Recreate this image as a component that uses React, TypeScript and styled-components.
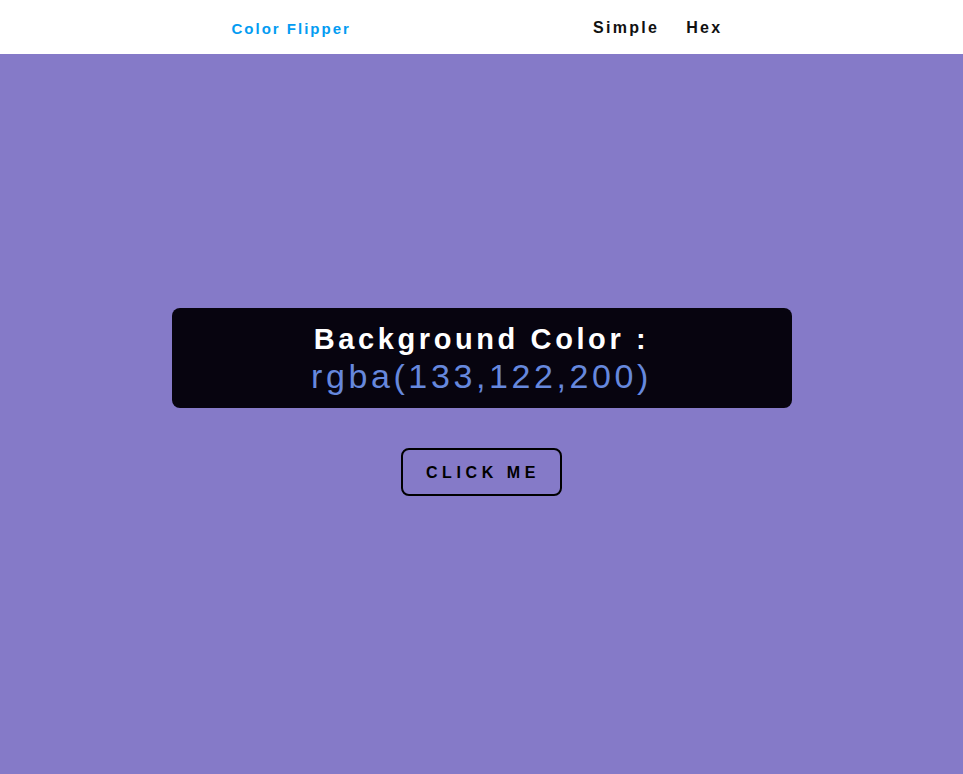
import React, { useState } from 'react';
import styled, { createGlobalStyle } from 'styled-components';

const GlobalStyle = createGlobalStyle`
  body {
    margin: 0;
    padding: 0;
    font-family: "Liberation Sans", Arial, sans-serif;
  }
`;

const Page = styled.div<{ $bg: string }>`
  min-height: 100vh;
  background-color: ${(p) => p.$bg};
  display: flex;
  flex-direction: column;
`;

const Nav = styled.nav`
  height: 54px;
  background-color: #fff;
  display: flex;
  justify-content: center;
`;

const NavInner = styled.div`
  width: 500px;
  display: flex;
  align-items: center;
  justify-content: space-between;
  padding-top: 2px;
  box-sizing: border-box;
`;

const Brand = styled.a`
  color: #049cf2;
  font-weight: bold;
  font-size: 15px;
  letter-spacing: 2px;
  text-decoration: none;
`;

const Links = styled.ul`
  display: flex;
  gap: 27px;
  list-style: none;
  margin: 0;
  padding: 0 9px 0 0;
`;

const LinkItem = styled.a`
  color: #111;
  font-weight: bold;
  font-size: 16px;
  letter-spacing: 2.3px;
  text-decoration: none;
`;

const Main = styled.main`
  flex: 1;
  display: flex;
  flex-direction: column;
  align-items: center;
  padding-top: 254px;
  gap: 40px;
`;

const ColorBox = styled.div`
  width: 620px;
  height: 100px;
  box-sizing: border-box;
  background-color: #07040f;
  border-radius: 8px;
  display: flex;
  flex-direction: column;
  align-items: center;
  justify-content: center;
`;

const Title = styled.h2`
  margin: 0;
  color: #fff;
  font-size: 29px;
  letter-spacing: 3.6px;
  line-height: 36px;
`;

const Value = styled.span`
  color: #6688dd;
  font-size: 34px;
  letter-spacing: 3.6px;
  line-height: 38px;
`;

const Button = styled.button`
  width: 161px;
  height: 48px;
  background: transparent;
  border: 2px solid #000;
  border-radius: 8px;
  font-family: "Liberation Sans", Arial, sans-serif;
  font-weight: bold;
  font-size: 16px;
  letter-spacing: 4.6px;
  padding: 2px 0 0 3px;
  color: #000;
  cursor: pointer;
`;

const App = () => {
  const [color, setColor] = useState('rgba(133,122,200)');

  const flip = () => {
    const r = Math.floor(Math.random() * 256);
    const g = Math.floor(Math.random() * 256);
    const b = Math.floor(Math.random() * 256);
    setColor(`rgba(${r},${g},${b})`);
  };

  return (
    <>
      <GlobalStyle />
      <Page $bg={color}>
        <Nav>
          <NavInner>
            <Brand href="#">Color Flipper</Brand>
            <Links>
              <li><LinkItem href="#">Simple</LinkItem></li>
              <li><LinkItem href="#">Hex</LinkItem></li>
            </Links>
          </NavInner>
        </Nav>
        <Main>
          <ColorBox>
            <Title>Background Color :</Title>
            <Value>{color}</Value>
          </ColorBox>
          <Button onClick={flip}>CLICK ME</Button>
        </Main>
      </Page>
    </>
  );
};

export default App;
